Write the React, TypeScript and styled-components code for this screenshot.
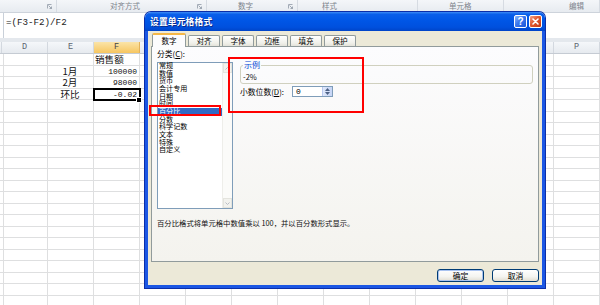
import React from 'react';
import styled, { createGlobalStyle, css } from 'styled-components';

const CJK = `"Noto Sans CJK SC", "Noto Sans", sans-serif`;
const MONO = `"Liberation Mono", "Noto Sans CJK SC", monospace`;

const GlobalStyle = createGlobalStyle`
  html, body { margin: 0; padding: 0; background: #fff; }
  body { font-family: ${CJK}; }
  * { box-sizing: border-box; }
`;

const Screen = styled.div`
  position: relative;
  width: 600px;
  height: 305px;
  overflow: hidden;
  display: flex;
  flex-direction: column;
  background: #fff;
`;

/* ---------- Ribbon labels ---------- */
const RibbonBand = styled.div`
  display: flex;
  height: 13px;
  flex: none;
  background: linear-gradient(#f4f6f9, #e7ebf0);
  border-bottom: 1px solid #cdd3db;
`;
const RibbonGroup = styled.div<{ $w: number; $pad: number }>`
  width: ${(p) => p.$w}px;
  flex: none;
  display: flex;
  align-items: center;
  padding-left: ${(p) => p.$pad}px;
  border-right: 1px solid #d6dbe2;
  font-size: 7.5px;
  line-height: 12px;
  color: #7d838c;
  white-space: nowrap;
`;
const Launcher = styled.svg`
  margin-left: auto;
  margin-right: 4px;
  width: 5px;
  height: 5px;
`;

/* ---------- Formula bar ---------- */
const FormulaBar = styled.div`
  height: 25px;
  flex: none;
  padding-left: 3px;
  background: #fff;
`;
const FormulaInner = styled.div`
  height: 100%;
  border-left: 1px solid #c9d0d9;
  padding: 5px 0 0 2px;
  font-family: ${MONO};
  font-size: 9.2px;
  line-height: 10px;
  color: #222;
`;
const BarGap = styled.div`
  height: 4px;
  flex: none;
  background: #e4e8ed;
`;

/* ---------- Sheet ---------- */
const Sheet = styled.div`
  flex: 1;
  overflow: hidden;
`;
const HeaderRow = styled.div`
  display: grid;
  grid-template-columns: 2px repeat(13, 46px);
  height: 12px;
  border-bottom: 1px solid #c5cbd3;
  background: linear-gradient(#f5f7fa, #e6eaef);
`;
const HeaderCell = styled.div<{ $active?: boolean }>`
  border-right: 1px solid #d3d8df;
  text-align: center;
  font-family: ${MONO};
  font-size: 8.5px;
  line-height: 11px;
  color: #5d6470;
  ${(p) =>
    p.$active &&
    css`
      background: linear-gradient(#fbe4a8, #f6c660);
      border-right-color: #e3b25a;
      color: #444;
    `}
`;
const Row = styled.div`
  display: grid;
  grid-template-columns: 2px repeat(13, 46px);
  height: 11.5px;
  border-bottom: 1px solid #dedfe0;
`;
const Cell = styled.div<{ $align?: 'left' | 'center' | 'right'; $num?: boolean; $selected?: boolean }>`
  position: relative;
  border-right: 1px solid #dedfe0;
  text-align: ${(p) => p.$align || 'left'};
  padding: 0 2px 0 1px;
  font-size: ${(p) => (p.$num ? '8px' : '9.6px')};
  font-family: ${(p) => (p.$num ? MONO : CJK)};
  line-height: 11px;
  color: #111;
  white-space: nowrap;
  ${(p) =>
    p.$selected &&
    css`
      outline: 2px solid #000;
      outline-offset: -1px;
      z-index: 1;
      &::after {
        content: '';
        position: absolute;
        right: -3px;
        bottom: -3px;
        width: 4px;
        height: 4px;
        background: #000;
        border: 1px solid #fff;
      }
    `}
`;

/* ---------- Dialog ---------- */
const FRAME = '#1b57e4';
const Dialog = styled.div`
  position: absolute;
  left: 145px;
  top: 12px;
  width: 400px;
  height: 276px;
  display: flex;
  flex-direction: column;
  border-radius: 6px 6px 0 0;
  overflow: hidden;
  box-shadow: 0 0 0 1px #0b2ea8;
`;
const TitleBar = styled.div`
  height: 19px;
  flex: none;
  display: flex;
  align-items: center;
  padding: 0 3px 0 5px;
  background: linear-gradient(#3d8cf6 0%, #0a5fea 12%, #0056e6 45%, #0050de 80%, #0044c8 100%);
`;
const Title = styled.span`
  font-size: 8.8px;
  font-weight: 700;
  color: #fff;
  letter-spacing: 0.1px;
  text-shadow: 1px 1px 0 #0a2a8a;
`;
const TitleButtons = styled.div`
  margin-left: auto;
  display: flex;
  gap: 2px;
`;
const TitleButton = styled.div<{ $close?: boolean }>`
  width: 13px;
  height: 13px;
  border: 1px solid #fff;
  border-radius: 2px;
  display: flex;
  align-items: center;
  justify-content: center;
  color: #fff;
  font-family: "Liberation Sans", sans-serif;
  font-weight: 700;
  font-size: 10px;
  line-height: 1;
  background: ${(p) =>
    p.$close ? 'linear-gradient(135deg, #f0a38a, #e0582f 45%, #c23a14)' : 'linear-gradient(135deg, #8fb8fb, #3b78ee 45%, #1a55d8)'};
`;
const Body = styled.div`
  flex: 1;
  display: flex;
  flex-direction: column;
  background: #ece9d8;
  border: 3px solid ${FRAME};
  border-top: none;
  padding: 0 3px;
`;
const TabRow = styled.div`
  height: 16px;
  display: flex;
  align-items: flex-end;
  padding-left: 1px;
  margin-bottom: -1px;
  position: relative;
  z-index: 2;
`;
const Tab = styled.div<{ $active?: boolean }>`
  width: ${(p) => (p.$active ? 34 : 32)}px;
  margin-left: ${(p) => (p.$active ? 0 : 2)}px;
  height: ${(p) => (p.$active ? 14 : 11)}px;
  margin-bottom: ${(p) => (p.$active ? 0 : 1)}px;
  border: 1px solid #919b9c;
  border-bottom: none;
  border-radius: 2px 2px 0 0;
  background: ${(p) => (p.$active ? '#fcfcfe' : 'linear-gradient(#ffffff, #f0f0ea 70%, #e3e2da)')};
  ${(p) => p.$active && css`border-top: 2px solid #f5b746;`}
  font-size: 7.6px;
  line-height: 9px;
  text-align: center;
  color: #000;
  padding-top: ${(p) => (p.$active ? 1 : 0)}px;
  overflow: hidden;
`;
const Panel = styled.div`
  height: 216px;
  flex: none;
  border: 1px solid #919b9c;
  background: linear-gradient(#fcfcfe, #f4f3ee);
  display: flex;
  flex-direction: column;
  padding: 1px 5px 0 5px;
`;
const PanelTop = styled.div`
  display: flex;
  gap: 7px;
`;
const LeftCol = styled.div`
  width: 76px;
  flex: none;
  display: flex;
  flex-direction: column;
`;
const Label = styled.div`
  font-size: 7.8px;
  line-height: 11px;
  height: 11px;
  color: #000;
  white-space: nowrap;
`;
const ListBox = styled.div`
  margin-top: 3px;
  height: 147px;
  border: 1px solid #7f9db9;
  background: #fff;
  display: flex;
`;
const Items = styled.div`
  flex: 1;
  margin-top: -1px;
`;
const Item = styled.div<{ $selected?: boolean }>`
  height: 7.66px;
  line-height: 7.66px;
  font-size: 7.1px;
  padding-left: 1px;
  white-space: nowrap;
  color: ${(p) => (p.$selected ? '#fff' : '#000')};
  background: ${(p) => (p.$selected ? '#316ac5' : 'transparent')};
`;
const ScrollBar = styled.div`
  width: 10px;
  flex: none;
  display: flex;
  flex-direction: column;
  justify-content: space-between;
  background: #fbfbf9;
  border-left: 1px solid #eeeeea;
`;
const ScrollArrow = styled.div`
  height: 10px;
  display: flex;
  align-items: center;
  justify-content: center;
  background: #f2f2ee;
  border: 1px solid #e4e4de;
`;
const RightCol = styled.div`
  flex: 1;
  display: flex;
  flex-direction: column;
  padding-top: 13px;
`;
const SampleBox = styled.fieldset`
  margin: 0;
  padding: 3px 2px 1px;
  border: 1px solid #d0d0bf;
  border-radius: 3px;
  min-width: 0;
`;
const Legend = styled.legend`
  padding: 0 1px;
  font-size: 8px;
  line-height: 8px;
  color: #0046d5;
`;
const SampleText = styled.div`
  font-size: 7.6px;
  line-height: 10px;
  color: #111;
`;
const DecimalRow = styled.div`
  margin-top: 2px;
  display: flex;
  align-items: center;
  height: 11px;
`;
const DecimalLabel = styled.div`
  width: 52px;
  font-size: 7.8px;
  line-height: 11px;
  white-space: nowrap;
`;
const SpinInput = styled.div`
  width: 41px;
  height: 11px;
  border: 1px solid #7f9db9;
  background: #fff;
  display: flex;
`;
const SpinValue = styled.div`
  flex: 1;
  padding-left: 3px;
  font-family: ${MONO};
  font-size: 8px;
  line-height: 9px;
`;
const SpinButtons = styled.div`
  width: 10px;
  display: flex;
  flex-direction: column;
  background: linear-gradient(90deg, #dfe8fb, #c6d5f6);
  border-left: 1px solid #b8c8ef;
  align-items: center;
  justify-content: center;
  gap: 1px;
`;
const Description = styled.div`
  margin-top: 9px;
  font-size: 7.35px;
  line-height: 10px;
  color: #111;
  white-space: nowrap;
`;
const ButtonRow = styled.div`
  margin-top: 7px;
  display: flex;
  justify-content: flex-end;
  gap: 8px;
`;
const DlgButton = styled.div<{ $default?: boolean }>`
  width: 47px;
  height: 13px;
  border: 1px solid #003c74;
  border-radius: 3px;
  background: linear-gradient(#ffffff, #f4f4f0 60%, #e2ded2);
  font-size: 7.8px;
  line-height: 11px;
  text-align: center;
  color: #000;
  ${(p) => p.$default && css`box-shadow: inset 0 0 0 1px #a9c3f0;`}
`;

/* ---------- Annotations ---------- */
const RedBox = styled.div`
  position: absolute;
  border: 2px solid #ff0000;
  pointer-events: none;
  z-index: 10;
`;

const ribbonGroups = [
  { w: 57, label: '', pad: 0, launcher: true },
  { w: 150, label: '对齐方式', pad: 53, launcher: true },
  { w: 91, label: '数字', pad: 31, launcher: true },
  { w: 120, label: '样式', pad: 24, launcher: false },
  { w: 86, label: '单元格', pad: 31, launcher: false },
  { w: 96, label: '编辑', pad: 65, launcher: false },
];

const columns = ['D', 'E', 'F', 'G', 'H', 'I', 'J', 'K', 'L', 'M', 'N', 'O', 'P'];

type CellData = { text: string; align?: 'left' | 'center' | 'right'; num?: boolean; selected?: boolean };
const data: Record<number, Record<string, CellData>> = {
  0: { F: { text: '销售额' } },
  1: { E: { text: '1月', align: 'center' }, F: { text: '100000', align: 'right', num: true } },
  2: { E: { text: '2月', align: 'center' }, F: { text: '98000', align: 'right', num: true } },
  3: { E: { text: '环比', align: 'center' }, F: { text: '-0.02', align: 'right', num: true, selected: true } },
};

const categories = ['常规', '数值', '货币', '会计专用', '日期', '时间', '百分比', '分数', '科学记数', '文本', '特殊', '自定义'];
const tabs = ['数字', '对齐', '字体', '边框', '填充', '保护'];

const Chevron = ({ up }: { up?: boolean }) => (
  <svg width="5" height="3" viewBox="0 0 5 3">
    <path d={up ? 'M0.5 2.5 L2.5 0.5 L4.5 2.5' : 'M0.5 0.5 L2.5 2.5 L4.5 0.5'} fill="none" stroke="#b9bcc4" strokeWidth="1" />
  </svg>
);

const SpinArrow = ({ up }: { up?: boolean }) => (
  <svg width="5" height="3" viewBox="0 0 5 3">
    <path d={up ? 'M0 3 L2.5 0 L5 3 Z' : 'M0 0 L2.5 3 L5 0 Z'} fill="#4d6185" />
  </svg>
);

export default function App() {
  return (
    <Screen>
      <GlobalStyle />
      <RibbonBand>
        {ribbonGroups.map((g, i) => (
          <RibbonGroup key={i} $w={g.w} $pad={g.pad}>
            {g.label}
            {g.launcher && (
              <Launcher viewBox="0 0 5 5">
                <path d="M0.5 4.5 V0.5 H4.5" fill="none" stroke="#a3abb6" strokeWidth="1" />
                <path d="M1.5 1.5 L4.5 4.5 M2.5 4.5 H4.5 V2.5" fill="none" stroke="#8c95a2" strokeWidth="0.8" />
              </Launcher>
            )}
          </RibbonGroup>
        ))}
      </RibbonBand>
      <FormulaBar>
        <FormulaInner>=(F3-F2)/F2</FormulaInner>
      </FormulaBar>
      <BarGap />
      <Sheet>
        <HeaderRow>
          <HeaderCell />
          {columns.map((c) => (
            <HeaderCell key={c} $active={c === 'F'}>
              {c}
            </HeaderCell>
          ))}
        </HeaderRow>
        {Array.from({ length: 22 }).map((_, r) => (
          <Row key={r}>
            <Cell />
            {columns.map((c) => {
              const d = data[r]?.[c];
              return (
                <Cell key={c} $align={d?.align} $num={d?.num} $selected={d?.selected}>
                  {d?.text}
                </Cell>
              );
            })}
          </Row>
        ))}
      </Sheet>

      <Dialog>
        <TitleBar>
          <Title>设置单元格格式</Title>
          <TitleButtons>
            <TitleButton>?</TitleButton>
            <TitleButton $close>
              <svg width="7" height="7" viewBox="0 0 7 7">
                <path d="M1 1 L6 6 M6 1 L1 6" stroke="#fff" strokeWidth="1.6" strokeLinecap="round" />
              </svg>
            </TitleButton>
          </TitleButtons>
        </TitleBar>
        <Body>
          <TabRow>
            {tabs.map((t, i) => (
              <Tab key={t} $active={i === 0}>
                {t}
              </Tab>
            ))}
          </TabRow>
          <Panel>
            <PanelTop>
              <LeftCol>
                <Label>
                  分类(<u>C</u>):
                </Label>
                <ListBox>
                  <Items>
                    {categories.map((c) => (
                      <Item key={c} $selected={c === '百分比'}>
                        {c}
                      </Item>
                    ))}
                  </Items>
                  <ScrollBar>
                    <ScrollArrow>
                      <Chevron up />
                    </ScrollArrow>
                    <ScrollArrow>
                      <Chevron />
                    </ScrollArrow>
                  </ScrollBar>
                </ListBox>
              </LeftCol>
              <RightCol>
                <SampleBox>
                  <Legend>示例</Legend>
                  <SampleText>-2%</SampleText>
                </SampleBox>
                <DecimalRow>
                  <DecimalLabel>
                    小数位数(<u>D</u>):
                  </DecimalLabel>
                  <SpinInput>
                    <SpinValue>0</SpinValue>
                    <SpinButtons>
                      <SpinArrow up />
                      <SpinArrow />
                    </SpinButtons>
                  </SpinInput>
                </DecimalRow>
              </RightCol>
            </PanelTop>
            <Description>百分比格式将单元格中数值乘以 100，并以百分数形式显示。</Description>
          </Panel>
          <ButtonRow>
            <DlgButton $default>确定</DlgButton>
            <DlgButton>取消</DlgButton>
          </ButtonRow>
        </Body>
      </Dialog>

      <RedBox style={{ left: 228, top: 57, width: 136, height: 56 }} />
      <RedBox style={{ left: 149, top: 105, width: 72, height: 11 }} />
    </Screen>
  );
}
